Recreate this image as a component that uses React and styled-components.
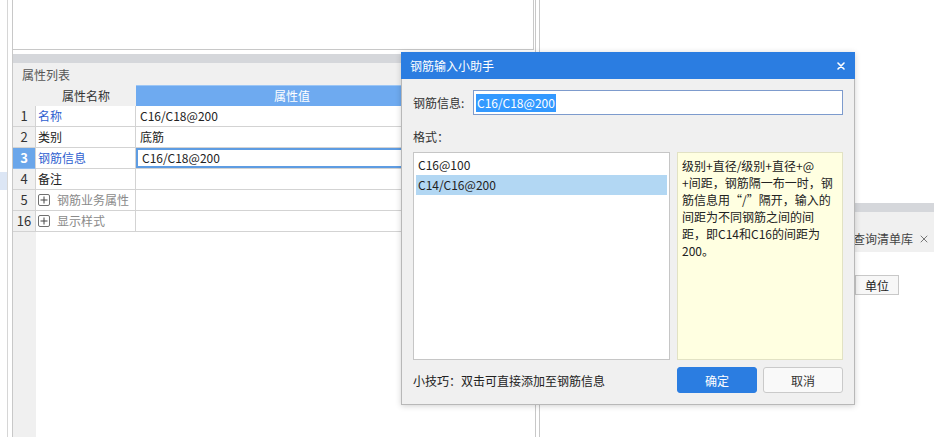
import { Fragment } from "react";
import styled, { createGlobalStyle } from "styled-components";

const GlobalStyle = createGlobalStyle`
  body {
    margin: 0;
    background: #fff;
    font-family: "Microsoft YaHei", "Noto Sans CJK SC", "Noto Sans", sans-serif;
    font-size: 12px;
    color: #222;
  }
`;

const Screen = styled.div`
  position: relative;
  width: 934px;
  height: 437px;
  overflow: hidden;
  display: flex;
`;

const Gutter = styled.div`
  width: 7px;
  flex-shrink: 0;
  border-right: 1px solid #d6d6d6;
`;

const GutterMark = styled.div`
  margin-top: 172px;
  height: 18px;
  background: #dce6f5;
`;

const LeftPanel = styled.div`
  width: 524px;
  flex-shrink: 0;
  margin-left: 4px;
  box-sizing: border-box;
  border-left: 1px solid #c8c8c8;
  border-right: 1px solid #c8c8c8;
  display: flex;
  flex-direction: column;
`;

const TopBox = styled.div`
  height: 50px;
  box-sizing: border-box;
  margin-right: 1px;
  border-right: 1px solid #c8c8c8;
  border-bottom: 1px solid #c8c8c8;
`;

const GreyBar = styled.div`
  height: 9px;
  margin-top: ${(p) => p.$gap || 0}px;
  background: #d5d7db;
`;

const PanelTitle = styled.div`
  height: 23px;
  line-height: 23px;
  padding-left: 9px;
  background: #f0f0f0;
  color: #555;
`;

const Table = styled.div`
  display: grid;
  grid-template-columns: 23px 100px 312px;
  width: 435px;
`;

const HeadCell = styled.div`
  height: 20px;
  line-height: 20px;
  text-align: center;
  background: ${(p) => (p.$active ? "#6eaaf0" : "#f0f0f0")};
  color: ${(p) => (p.$active ? "#fff" : "#333")};
  border-top: 1px solid ${(p) => (p.$active ? "#9cc6f5" : "#f0f0f0")};
  margin-top: -1px;
`;

const IndexCell = styled.div`
  height: 21px;
  line-height: 20px;
  box-sizing: border-box;
  text-align: center;
  font-size: 13px;
  background: ${(p) => (p.$active ? "#6aa6ea" : "#f0f0f0")};
  color: ${(p) => (p.$active ? "#fff" : "#333")};
  font-weight: ${(p) => (p.$active ? 700 : 400)};
  border-bottom: 1px solid ${(p) => (p.$active ? "#8bbaf0" : "#d3d3d3")};
  border-right: 1px solid #d3d3d3;
`;

const NameCell = styled.div`
  height: 21px;
  line-height: 20px;
  box-sizing: border-box;
  padding-left: 2px;
  display: flex;
  align-items: center;
  gap: 7px;
  color: ${(p) => p.$color || "#222"};
  border-bottom: 1px solid #d3d3d3;
  border-right: 1px solid #d3d3d3;
`;

const ValueCell = styled.div`
  height: 21px;
  line-height: 20px;
  box-sizing: border-box;
  padding-left: ${(p) => (p.$editing ? 6 : 4)}px;
  border-bottom: 1px solid #d3d3d3;
  border-right: 1px solid #d3d3d3;
  box-shadow: ${(p) => (p.$editing ? "inset 0 0 0 2px #5e9ce2" : "none")};
`;

const PlusBox = styled.span`
  width: 12px;
  height: 12px;
  box-sizing: border-box;
  border: 1px solid #707070;
  border-radius: 2px;
  display: inline-flex;
  align-items: center;
  justify-content: center;
  background: #fff;
`;

const Filler = styled.div`
  flex: 1;
  display: flex;
`;

const FillerIndex = styled.div`
  width: 23px;
  background: #f0f0f0;
`;

const RightPanel = styled.div`
  flex: 1;
  margin-left: 3px;
  border-left: 1px solid #c8c8c8;
  display: flex;
  flex-direction: column;
`;

const RightTop = styled.div`
  height: 203px;
`;

const TabStrip = styled.div`
  height: 40px;
  background: #f0f0f0;
  padding-left: 313px;
  display: flex;
  align-items: flex-end;
`;

const Tab = styled.div`
  height: 27px;
  display: flex;
  align-items: center;
  gap: 7px;
  color: #444;
  white-space: nowrap;
`;

const GridHeader = styled.div`
  margin-top: 23px;
  padding-left: 315px;
  display: flex;
`;

const ColumnHead = styled.div`
  width: 44px;
  height: 20px;
  line-height: 19px;
  box-sizing: border-box;
  text-align: center;
  border: 1px solid #c8c8c8;
  background: #f7f7f7;
`;

const Dialog = styled.div`
  position: absolute;
  left: 401px;
  top: 52px;
  width: 454px;
  height: 353px;
  box-sizing: border-box;
  border: 1px solid #b8b8b8;
  border-top: none;
  background: #f0f0f0;
  display: flex;
  flex-direction: column;
  box-shadow: 0 1px 6px rgba(0, 0, 0, 0.18);
`;

const TitleBar = styled.div`
  height: 27px;
  margin: 0 -1px;
  padding: 0 10px 0 9px;
  background: #2b7de1;
  color: #fff;
  display: flex;
  align-items: center;
  justify-content: space-between;
`;

const Body = styled.div`
  flex: 1;
  padding: 11px 11px 0 11px;
  display: flex;
  flex-direction: column;
`;

const FieldRow = styled.div`
  display: flex;
  align-items: center;
  height: 25px;
`;

const FieldLabel = styled.div`
  width: 60px;
  color: #333;
`;

const Field = styled.div`
  flex: 1;
  height: 25px;
  box-sizing: border-box;
  border: 1px solid #7d9bcd;
  background: #fff;
  padding-left: 2px;
  display: flex;
  align-items: center;
`;

const Selected = styled.span`
  background: #3399ff;
  color: #fff;
  line-height: 18px;
  padding: 0 1px;
`;

const SectionLabel = styled.div`
  margin-top: 13px;
  height: 18px;
  line-height: 18px;
  color: #333;
`;

const Panels = styled.div`
  margin-top: 6px;
  height: 208px;
  display: flex;
  gap: 7px;
`;

const List = styled.div`
  width: 257px;
  box-sizing: border-box;
  border: 1px solid #c6c6c6;
  background: #fff;
  padding: 2px;
`;

const ListItem = styled.div`
  height: 20px;
  line-height: 20px;
  padding-left: 2px;
  background: ${(p) => (p.$selected ? "#b2d7f3" : "transparent")};
`;

const Hint = styled.div`
  flex: 1;
  box-sizing: border-box;
  border: 1px solid #e2e2c4;
  background: #ffffe1;
  padding: 4px 4px;
  line-height: 17px;
  color: #222;
  white-space: nowrap;
`;

const Footer = styled.div`
  margin-top: 7px;
  display: flex;
  align-items: center;
  justify-content: space-between;
`;

const Buttons = styled.div`
  display: flex;
  gap: 6px;
`;

const Button = styled.button`
  width: 80px;
  height: 26px;
  border-radius: 3px;
  font: inherit;
  font-size: 12px;
  cursor: pointer;
  border: 1px solid ${(p) => (p.$primary ? "#2b7de1" : "#cacaca")};
  background: ${(p) => (p.$primary ? "#2b7de1" : "#f9f9f9")};
  color: ${(p) => (p.$primary ? "#fff" : "#333")};
`;

const Cross = ({ size = 8, color = "#fff", width = 1.6 }) => (
  <svg width={size} height={size} viewBox="0 0 8 8">
    <path d="M1 1L7 7M7 1L1 7" stroke={color} strokeWidth={width} strokeLinecap="round" />
  </svg>
);

const Plus = () => (
  <PlusBox>
    <svg width="8" height="8" viewBox="0 0 8 8">
      <path d="M4 0.5V7.5M0.5 4H7.5" stroke="#444" strokeWidth="1" />
    </svg>
  </PlusBox>
);

const rows = [
  { no: "1", name: "名称", color: "#2f5fd0", value: "C16/C18@200" },
  { no: "2", name: "类别", value: "底筋" },
  { no: "3", name: "钢筋信息", color: "#2f5fd0", value: "C16/C18@200", active: true },
  { no: "4", name: "备注", value: "" },
  { no: "5", name: "钢筋业务属性", color: "#8a8a8a", group: true },
  { no: "16", name: "显示样式", color: "#8a8a8a", group: true },
];

export default function App() {
  return (
    <>
      <GlobalStyle />
      <Screen>
        <Gutter>
          <GutterMark />
        </Gutter>

        <LeftPanel>
          <TopBox />
          <GreyBar $gap={4} />
          <PanelTitle>属性列表</PanelTitle>
          <Table>
            <HeadCell />
            <HeadCell>属性名称</HeadCell>
            <HeadCell $active>属性值</HeadCell>
            {rows.map((r) => (
              <Fragment key={r.no}>
                <IndexCell $active={r.active}>{r.no}</IndexCell>
                <NameCell $color={r.color}>
                  {r.group && <Plus />}
                  {r.name}
                </NameCell>
                <ValueCell $editing={r.active}>{r.value}</ValueCell>
              </Fragment>
            ))}
          </Table>
          <Filler>
            <FillerIndex />
          </Filler>
        </LeftPanel>

        <RightPanel>
          <RightTop />
          <GreyBar />
          <TabStrip>
            <Tab>
              查询清单库
              <Cross size={8} color="#777" width={1} />
            </Tab>
          </TabStrip>
          <GridHeader>
            <ColumnHead>单位</ColumnHead>
          </GridHeader>
        </RightPanel>

        <Dialog>
          <TitleBar>
            钢筋输入小助手
            <Cross />
          </TitleBar>
          <Body>
            <FieldRow>
              <FieldLabel>钢筋信息:</FieldLabel>
              <Field>
                <Selected>C16/C18@200</Selected>
              </Field>
            </FieldRow>
            <SectionLabel>格式：</SectionLabel>
            <Panels>
              <List>
                <ListItem>C16@100</ListItem>
                <ListItem $selected>C14/C16@200</ListItem>
              </List>
              <Hint>
                级别+直径/级别+直径+@
                <br />
                +间距，钢筋隔一布一时，钢
                <br />
                筋信息用“/”隔开，输入的
                <br />
                间距为不同钢筋之间的间
                <br />
                距，即C14和C16的间距为
                <br />
                200。
              </Hint>
            </Panels>
            <Footer>
              <span>小技巧：双击可直接添加至钢筋信息</span>
              <Buttons>
                <Button $primary>确定</Button>
                <Button>取消</Button>
              </Buttons>
            </Footer>
          </Body>
        </Dialog>
      </Screen>
    </>
  );
}
